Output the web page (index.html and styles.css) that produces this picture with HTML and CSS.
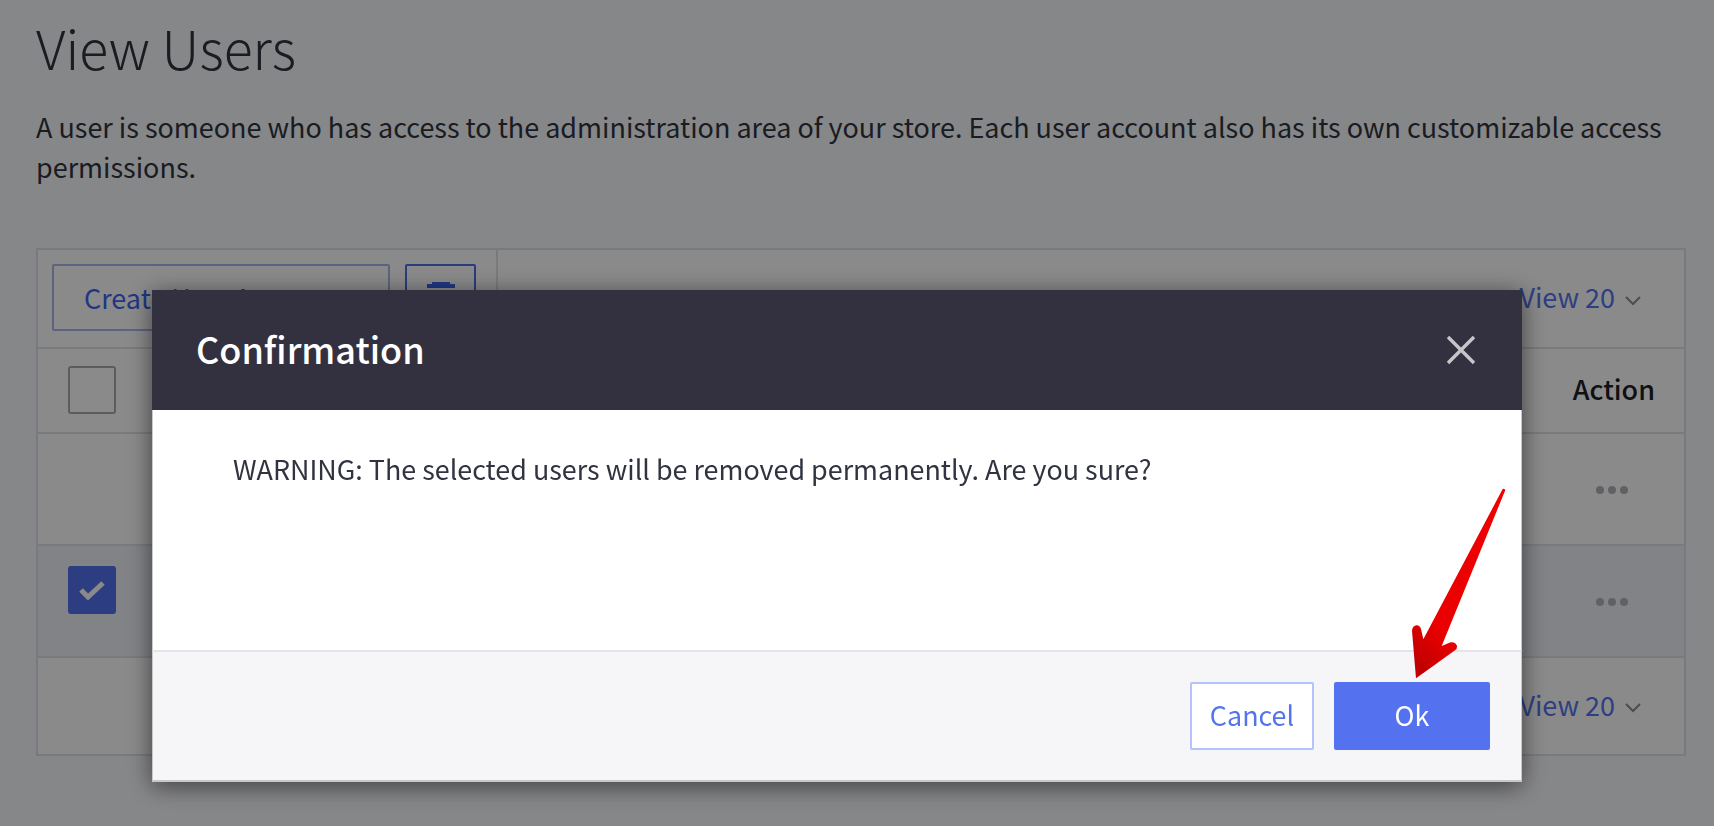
FILE: index.html
```html
<!DOCTYPE html>
<html lang="en">
<head>
<meta charset="utf-8">
<title>View Users</title>
<link rel="stylesheet" href="styles.css">
</head>
<body>
<main class="page">
  <h1 class="title">View Users</h1>
  <p class="intro">A user is someone who has access to the administration area of your store. Each user account also has its own customizable access permissions.</p>
  <section class="table">
    <div class="row toolbar">
      <div class="actions">
        <button class="btn create">Create User Account</button>
        <button class="btn trash" aria-label="Delete">
          <svg viewBox="0 0 28 32" width="28" height="32"><path d="M5 2h18v2H5zM0 4h28v4H0zM3 10h22v22H3z" fill="currentColor"/></svg>
        </button>
      </div>
      <div class="pager"><span>View 20</span><svg class="chev" viewBox="0 0 16 10" width="16" height="10"><path d="M1 1l7 7 7-7" fill="none" stroke="currentColor" stroke-width="2"/></svg></div>
    </div>
    <div class="row head">
      <span class="check"></span>
      <span class="action-label">Action</span>
    </div>
    <div class="row item">
      <span class="more"><i></i><i></i><i></i></span>
    </div>
    <div class="row item selected">
      <span class="check on"><svg viewBox="0 0 26 20" width="26" height="20"><path d="M2 10l7 7L24 3" fill="none" stroke="#fff" stroke-width="5"/></svg></span>
      <span class="more"><i></i><i></i><i></i></span>
    </div>
    <div class="row foot">
      <div class="pager"><span>View 20</span><svg class="chev" viewBox="0 0 16 10" width="16" height="10"><path d="M1 1l7 7 7-7" fill="none" stroke="currentColor" stroke-width="2"/></svg></div>
    </div>
  </section>
</main>
<div class="backdrop"></div>
<div class="modal">
  <header class="modal-head">
    <h2>Confirmation</h2>
    <svg class="close" viewBox="0 0 30 30" width="30" height="30"><path d="M2 2l26 26M28 2L2 28" fill="none" stroke="currentColor" stroke-width="3.4"/></svg>
  </header>
  <div class="modal-body">WARNING: The selected users will be removed permanently. Are you sure?</div>
  <footer class="modal-foot">
    <button class="mbtn cancel">Cancel</button>
    <button class="mbtn ok">Ok</button>
  </footer>
</div>
<svg class="arrow" viewBox="0 0 360 630" width="120" height="210">
  <defs><linearGradient id="red" x1="0.75" y1="0.05" x2="0.2" y2="1"><stop offset="0" stop-color="#f00000"/><stop offset="0.75" stop-color="#ea0000"/><stop offset="1" stop-color="#c00000"/></linearGradient></defs>
  <path d="M308 27 Q312 24 316 30 L125 498 L152 487 Q165 485 171 497 Q172 506 165 511 L48 595 L36 452 Q38 437 50 436 Q60 437 63 447 L70 478 Z" fill="url(#red)"/>
</svg>
</body>
</html>
```
FILE: styles.css
```css
* { box-sizing: border-box; }
html, body { margin: 0; height: 100%; }
body {
  background: #f8f9fc;
  color: #313440;
  font-family: "Noto Sans CJK SC", "Source Sans Pro", "Open Sans", sans-serif;
  overflow: hidden;
}
.page { padding: 11px 28px 0 36px; }
.title { margin: 0; font-size: 53.6px; line-height: 72px; font-weight: 300; }
.intro { margin: 24px 0 0; font-size: 26.96px; line-height: 40px; }
.table { margin-top: 61px; border: 2px solid #e0e2e7; background: #fff; }
.row { display: flex; align-items: center; justify-content: space-between; border-top: 2px solid #e0e2e7; padding: 0 29px 0 30px; }
.toolbar { border-top: 0; height: 97px; padding: 0 43px 0 0; }
.head { height: 85px; }
.item { height: 112px; justify-content: flex-end; padding-right: 31px; }
.selected { background: #eef2f9; justify-content: space-between; }
.foot { height: 98px; justify-content: flex-end; padding-right: 43px; }
.actions { display: flex; align-items: center; gap: 15px; height: 100%; padding: 0 20px 0 14px; border-right: 2px solid #e0e2e7; }
.btn { font: inherit; height: 67px; border-radius: 2px; background: transparent; color: #3c64f4; margin-top: -2px; }
.create { width: 338px; border: 2px solid #a9b8ee; font-size: 26.96px; text-align: left; padding: 0 0 0 30px; }
.trash { width: 71px; border: 2px solid #4f6fe8; padding: 14px 0 0; display: flex; justify-content: center; align-items: flex-start; }
.pager { display: flex; align-items: center; gap: 10px; color: #5474ee; font-size: 26.96px; padding-bottom: 2px; }
.pager span { padding-bottom: 2px; }
.chev { color: #8b8e97; margin-top: 6px; }
.check { width: 48px; height: 48px; border: 2px solid #a9abb2; border-radius: 3px; background: #fff; display: flex; align-items: center; justify-content: center; }
.head .check { margin-top: -2px; }
.check.on { background: #5472f0; border-color: #5472f0; align-self: flex-start; margin-top: 20px; }
.action-label { font-size: 26.96px; font-weight: 500; color: #1d1f27; margin-bottom: 4px; }
.more { display: flex; gap: 4px; margin-right: 25px; padding-top: 2px; }
.more i { width: 8px; height: 8px; border-radius: 50%; background: #b2b4ba; }
.backdrop { position: fixed; inset: 0; background: rgba(0, 0, 0, .46); }
.modal { position: fixed; left: 152px; top: 290px; width: 1370px; height: 492px; display: flex; flex-direction: column; border-radius: 2px; box-shadow: 0 4px 24px rgba(0, 0, 0, .55); background: #fff; }
.modal-head { height: 120px; flex: none; background: #33313f; color: #fff; display: flex; align-items: center; justify-content: space-between; padding: 0 46px 4px 44px; }
.modal-head h2 { margin: 0; font-size: 36px; font-weight: 500; }
.close { color: #c6c6ca; margin-top: 4px; }
.modal-body { flex: 1; padding: 39px 80px; font-size: 26.9px; line-height: 40px; border-left: 1px solid #c8c8c8; border-right: 1px solid #c8c8c8; }
.modal-foot { height: 132px; flex: none; background: #f6f6f9; border: 1px solid #c8c8c8; border-top: 2px solid #e4e5ea; border-bottom-width: 2px; display: flex; justify-content: flex-end; align-items: center; gap: 20px; padding: 0 31px 1px 0; }
.mbtn { font: inherit; font-size: 26.9px; height: 68px; border-radius: 2px; padding: 0 0 2px; }
.cancel { width: 124px; background: #fff; border: 2px solid #b4c3fb; color: #5474ee; }
.ok { width: 156px; background: #5472f0; border: 0; color: #fff; }
.arrow { position: fixed; left: 1400px; top: 480px; }
```
